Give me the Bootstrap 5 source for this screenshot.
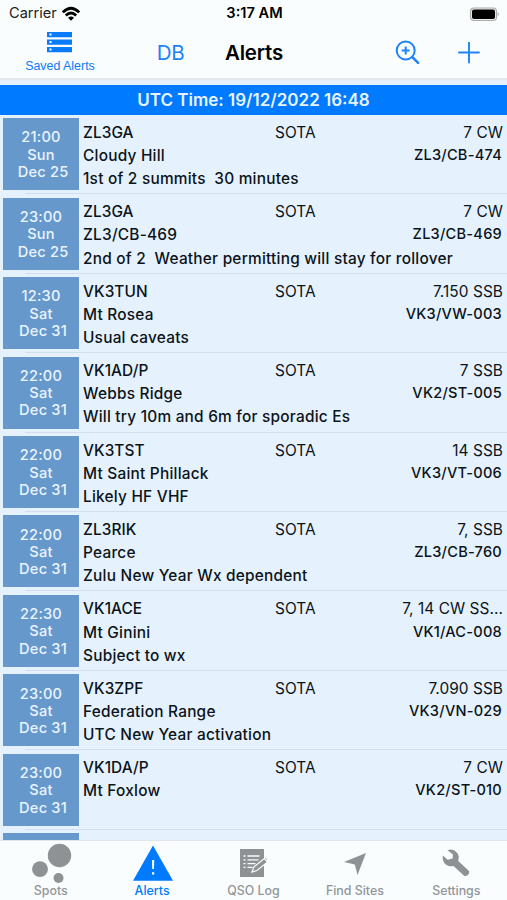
<!DOCTYPE html>
<html lang="en">
<head>
<meta charset="utf-8">
<meta name="viewport" content="width=device-width, initial-scale=1">
<title>Alerts</title>
<link href="https://cdn.jsdelivr.net/npm/bootstrap@5.3.0/dist/css/bootstrap.min.css" rel="stylesheet">
<style>
body{font-family:Inter,"Liberation Sans",sans-serif;background:#e5f2fe;color:#0c1319;font-size:15.4px;line-height:23.2px;font-weight:500}
.app{height:900px}
.top-area{background:#fafdfe;height:80px;border-bottom:2px solid #e3e6ed}
.status{height:28px;font-size:14.6px;color:#222;font-weight:400;padding:0 7px 0 9px}
.third{flex:1 1 0}
.nav-grid{display:grid;grid-template-columns:120px 101px 66px 1fr;height:50px;color:#1e83f8}
.saved{font:400 12.4px/14px "Liberation Sans",sans-serif;color:#0a7bfb}
.db{font-size:20.5px;font-weight:400;letter-spacing:-.3px}
.title{font-size:20.5px;font-weight:600;color:#000;letter-spacing:-.2px}
.actions{gap:38px;padding-right:27px}
.utc{height:29.5px;margin-top:5px;padding-top:2px;background:#007aff;color:#e8f4ff;font-size:17px;font-weight:600}
.alerts{margin-top:3.7px}
.alert-row{height:79.45px;padding-left:3px;background:linear-gradient(#d0dfeb,#d0dfeb) 25px 75px/100% 1px no-repeat}
.when{width:76px;height:72px;background:#6698cc;color:#e9f4ff;line-height:17.3px;padding-top:11.3px;letter-spacing:.2px;font-size:14.6px}
.info{padding:2.6px 4px 0 4px;letter-spacing:.23px}
.line{display:grid;grid-template-columns:192px 1fr auto;height:23.2px;letter-spacing:.07px}
.remarks{white-space:pre}
.light{font-weight:400}
.ref{font-size:14.6px;padding-right:1px}
.tabs{height:60px;background:#fafdfe;border-top:1px solid #dfe7ee;color:#929699;font-size:12.4px;line-height:16px}
.tab{flex:1 1 0}
.tab svg{display:block;margin:0 auto;width:42px;height:42px}
.tab.on{color:#007aff}
</style>
</head>
<body>
<div class="app d-flex flex-column overflow-hidden">
 <header class="top-area flex-shrink-0">
  <div class="status d-flex align-items-center">
   <div class="third d-flex align-items-center"><span>Carrier</span>
    <svg class="ms-1" width="20" height="16" viewBox="0 0 20 16" fill="none" stroke="#000" stroke-width="2.7"><path d="M1.8 6.4Q10-1.8 18.2 6.4M4.8 9.5Q10 4.4 15.2 9.5"/><path d="M7 11.8Q10 9 13 11.8L10 14.8Z" fill="#000" stroke="none"/></svg></div>
   <div class="fw-semibold text-black">3:17 AM</div>
   <div class="third d-flex justify-content-end">
    <svg width="31" height="15" viewBox="0 0 31 15"><rect x="1.500" y="1" width="26" height="12.500" rx="3.500" fill="#eee" stroke="#aaa" stroke-width="1.200"/><rect x="3" y="2.600" width="23" height="9.400" rx="2" fill="#000"/><path d="M28.600 5Q31 7.200 28.600 9.500z" fill="#aaa"/></svg></div>
  </div>
  <div class="nav-grid">
   <div class="saved text-center">
    <svg class="d-block mx-auto" width="26" height="31" viewBox="0 0 26 31" fill="#0a7bfb"><path d="M0 4h25v5.300H0zM0 11.500h25v5.300H0zM0 19h25v5.300H0z"/><path d="M2.500 5.400h2v2.200h-2zM2.500 12.900h2v2.200h-2zM2.500 20.400h2v2.200h-2z" fill="#fff"/></svg>
    <div>Saved Alerts</div></div>
   <div class="db d-flex align-items-center justify-content-center">DB</div>
   <div class="title d-flex align-items-center justify-content-center">Alerts</div>
   <div class="actions d-flex align-items-center justify-content-end">
   <svg width="26" height="26" viewBox="0 0 26 26" fill="none" stroke="#1e83f8" stroke-width="2"><circle cx="11.700" cy="10.500" r="9"/><path d="M7.700 10.500h8M11.700 6.500v8"/><path d="M18.300 17.100l5.800 5.800" stroke-width="2.600" stroke-linecap="round"/></svg>
   <svg width="22" height="22" viewBox="0 0 22 22" stroke="#1e83f8" stroke-width="1.900" stroke-linecap="round"><path d="M1 10.500h20M11 .500v20"/></svg>
   </div>
  </div>
 </header>
 <div class="utc d-flex align-items-center justify-content-center flex-shrink-0">UTC Time: 19/12/2022 16:48</div>
 <main class="alerts flex-grow-1 overflow-hidden">
  <div class="alert-row d-flex"><div class="when text-center">21:00<br>Sun<br>&nbsp;Dec 25</div><div class="info flex-grow-1"><div class="line"><span>ZL3GA</span><span class="light">SOTA</span><span class="light">7 CW</span></div><div class="d-flex justify-content-between"><span>Cloudy Hill</span><span class="ref">ZL3/CB-474</span></div><div class="remarks">1st of 2 summits  30 minutes</div></div></div>
  <div class="alert-row d-flex"><div class="when text-center">23:00<br>Sun<br>&nbsp;Dec 25</div><div class="info flex-grow-1"><div class="line"><span>ZL3GA</span><span class="light">SOTA</span><span class="light">7 CW</span></div><div class="d-flex justify-content-between"><span>ZL3/CB-469</span><span class="ref">ZL3/CB-469</span></div><div class="remarks">2nd of 2  Weather permitting will stay for rollover</div></div></div>
  <div class="alert-row d-flex"><div class="when text-center">12:30<br>Sat<br>&nbsp;Dec 31</div><div class="info flex-grow-1"><div class="line"><span>VK3TUN</span><span class="light">SOTA</span><span class="light">7.150 SSB</span></div><div class="d-flex justify-content-between"><span>Mt Rosea</span><span class="ref">VK3/VW-003</span></div><div class="remarks">Usual caveats</div></div></div>
  <div class="alert-row d-flex"><div class="when text-center">22:00<br>Sat<br>&nbsp;Dec 31</div><div class="info flex-grow-1"><div class="line"><span>VK1AD/P</span><span class="light">SOTA</span><span class="light">7 SSB</span></div><div class="d-flex justify-content-between"><span>Webbs Ridge</span><span class="ref">VK2/ST-005</span></div><div class="remarks">Will try 10m and 6m for sporadic Es</div></div></div>
  <div class="alert-row d-flex"><div class="when text-center">22:00<br>Sat<br>&nbsp;Dec 31</div><div class="info flex-grow-1"><div class="line"><span>VK3TST</span><span class="light">SOTA</span><span class="light">14 SSB</span></div><div class="d-flex justify-content-between"><span>Mt Saint Phillack</span><span class="ref">VK3/VT-006</span></div><div class="remarks">Likely HF VHF</div></div></div>
  <div class="alert-row d-flex"><div class="when text-center">22:00<br>Sat<br>&nbsp;Dec 31</div><div class="info flex-grow-1"><div class="line"><span>ZL3RIK</span><span class="light">SOTA</span><span class="light">7, SSB</span></div><div class="d-flex justify-content-between"><span>Pearce</span><span class="ref">ZL3/CB-760</span></div><div class="remarks">Zulu New Year Wx dependent</div></div></div>
  <div class="alert-row d-flex"><div class="when text-center">22:30<br>Sat<br>&nbsp;Dec 31</div><div class="info flex-grow-1"><div class="line"><span>VK1ACE</span><span class="light">SOTA</span><span class="light">7, 14 CW SS...</span></div><div class="d-flex justify-content-between"><span>Mt Ginini</span><span class="ref">VK1/AC-008</span></div><div class="remarks">Subject to wx</div></div></div>
  <div class="alert-row d-flex"><div class="when text-center">23:00<br>Sat<br>&nbsp;Dec 31</div><div class="info flex-grow-1"><div class="line"><span>VK3ZPF</span><span class="light">SOTA</span><span class="light">7.090 SSB</span></div><div class="d-flex justify-content-between"><span>Federation Range</span><span class="ref">VK3/VN-029</span></div><div class="remarks">UTC New Year activation</div></div></div>
  <div class="alert-row d-flex"><div class="when text-center">23:00<br>Sat<br>&nbsp;Dec 31</div><div class="info flex-grow-1"><div class="line"><span>VK1DA/P</span><span class="light">SOTA</span><span class="light">7 CW</span></div><div class="d-flex justify-content-between"><span>Mt Foxlow</span><span class="ref">VK2/ST-010</span></div></div></div>
  <div class="alert-row d-flex"><div class="when"></div></div>
 </main>
 <nav class="tabs d-flex text-center flex-shrink-0">
  <div class="tab"><svg viewBox="0 0 42 42" fill="#8e9294"><circle cx="29.500" cy="14.500" r="11.700"/><circle cx="10" cy="28.200" r="7.900"/><circle cx="28.500" cy="37" r="5"/></svg>Spots</div>
  <div class="tab on"><svg viewBox="0 0 42 42" fill="#007aff"><path d="M22 4.500L42 39.800H2z"/><path d="M21 19h2.200l-.2 9h-1.800zM21 31.300h2.200v2.200H21z" fill="#fff"/></svg>Alerts</div>
  <div class="tab"><svg viewBox="0 0 42 42" fill="#8e9294"><path d="M7 8h24v9l3 1-3 6v12H7z"/><path d="M10.500 15h2M14.500 15h12M10.500 18.800h2M14.500 18.800h11M10.500 22.600h2M14.500 22.600h8M10.500 26.400h2M14.500 26.400h5" stroke="#fafdfe" stroke-width="1.300"/><path d="M19 31l1.800-5 10.500-8.500 3.200 3.500L24 29.500z" stroke="#fafdfe" stroke-width="1.200"/></svg>QSO Log</div>
  <div class="tab"><svg viewBox="0 0 42 42" fill="#8e9294"><path d="M32 12L23.500 34l-2.700-10.500L10 21z"/></svg>Find Sites</div>
  <div class="tab"><svg viewBox="0 0 42 42" fill="#8e9294"><path d="M12.500 9.300Q17 7.300 21 10.700T23.200 20L33.500 29.500C36 32 31.500 36.700 28.800 34.400L18.500 25C13 26.500 6.500 22 7.800 14.400L12.700 18.700 17.600 17.500 18 13.500z"/></svg>Settings</div>
 </nav>
</div>
</body>
</html>
